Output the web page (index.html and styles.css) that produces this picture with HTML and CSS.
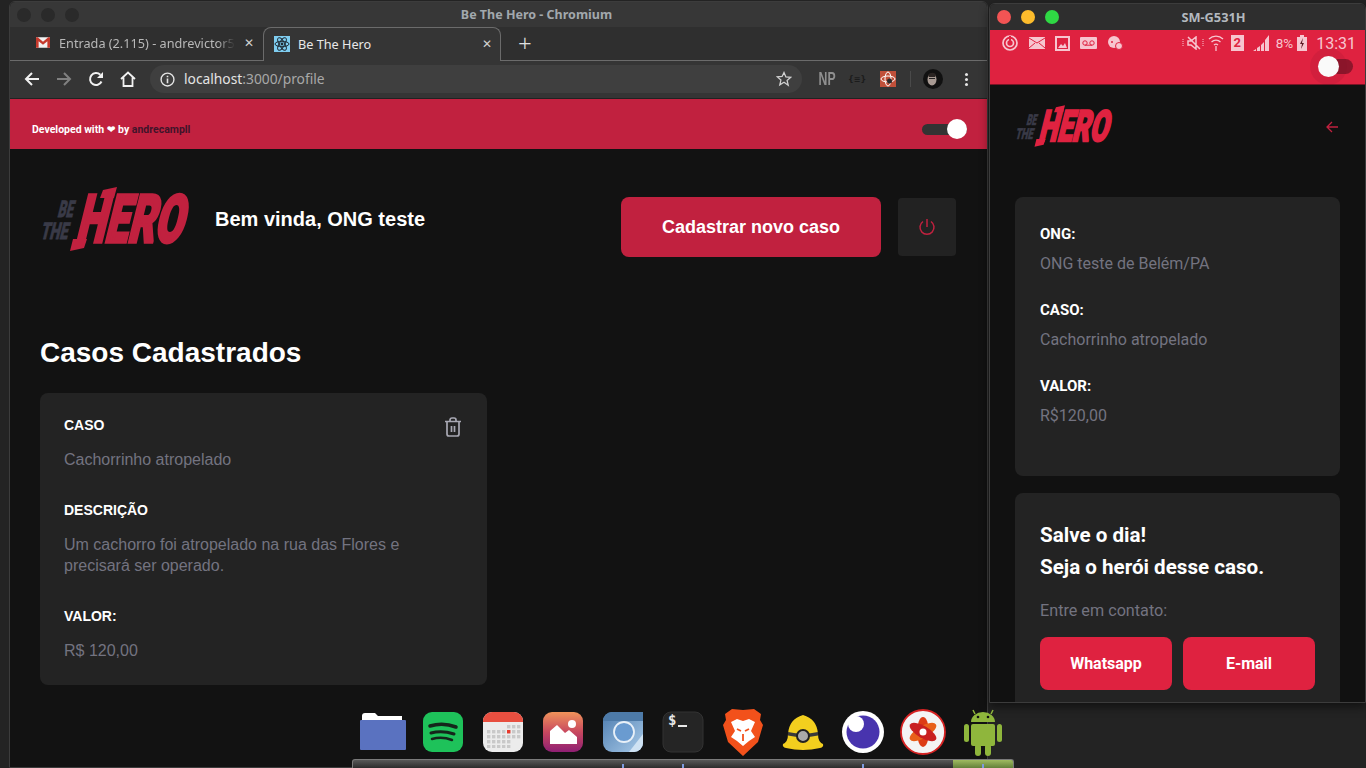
FILE: index.html
```html
<!DOCTYPE html>
<html lang="pt-br">
<head>
<meta charset="UTF-8">
<meta name="viewport" content="width=device-width, initial-scale=1.0">
<title>Be The Hero - Chromium</title>
<link rel="stylesheet" href="styles.css">
</head>
<body>
<svg class="defs" width="0" height="0">
  <!-- calendar grid -->
  <pattern id="cal" width="5" height="5" patternUnits="userSpaceOnUse" x="14" y="17"><rect width="3.400" height="3.400" fill="#c9c9c9"/></pattern>
</svg>

<!-- janela do chromium -->
<div class="browser">
  <div class="titlebar">
    <div class="lights"><span></span><span></span><span></span></div>
    <div class="win-title">Be The Hero - Chromium</div>
  </div>
  <div class="tabstrip">
    <div class="tab">
      <svg class="favicon" viewBox="0 0 16 12"><rect width="16" height="12" fill="#f2f2f2"/><path d="M0 0h2l6 5 6-5h2v12h-3V4.500L8 8.500 3 4.500V12H0z" fill="#c5392c"/></svg>
      <span class="tab-label tab-fade">Entrada (2.115) - andrevictor5</span>
      <span class="tab-x">✕</span>
    </div>
    <div class="tab tab-active">
      <svg class="favicon react" viewBox="0 0 16 16"><rect width="16" height="16" fill="#7fcdf0"/><g fill="none" stroke="#1f2a33" stroke-width="1"><ellipse cx="8" cy="8" rx="7" ry="2.700"/><ellipse cx="8" cy="8" rx="7" ry="2.700" transform="rotate(60 8 8)"/><ellipse cx="8" cy="8" rx="7" ry="2.700" transform="rotate(120 8 8)"/></g><circle cx="8" cy="8" r="1.400" fill="#1f2a33"/></svg>
      <span class="tab-label">Be The Hero</span>
      <span class="tab-x">✕</span>
    </div>
    <div class="tab-new">+</div>
  </div>
  <div class="toolbar">
    <svg class="tool" viewBox="0 0 16 16"><path d="M15 8H2M8 2L2 8l6 6" fill="none" stroke="#f1f1f1" stroke-width="2"/></svg>
    <svg class="tool" viewBox="0 0 16 16"><path d="M1 8h13M8 2l6 6-6 6" fill="none" stroke="#808080" stroke-width="2"/></svg>
    <svg class="tool" viewBox="0 0 16 16"><path d="M13.500 10.500A6 6 0 1 1 12.300 3.800" fill="none" stroke="#f1f1f1" stroke-width="2"/><path d="M15 1v6H9z" fill="#f1f1f1"/></svg>
    <svg class="tool" viewBox="0 0 16 16"><path d="M1 8l7-6.500L15 8M3.500 6.500V15h9V6.500" fill="none" stroke="#f1f1f1" stroke-width="1.800"/></svg>
    <div class="omnibox">
      <svg class="info" viewBox="0 0 14 14"><circle cx="7" cy="7" r="6" fill="none" stroke="#e4e4e4" stroke-width="1.300"/><path d="M7 6v4.500M7 3.500v1.500" stroke="#e4e4e4" stroke-width="1.500"/></svg>
      <span class="url">localhost<span class="url-dim">:3000/profile</span></span>
      <svg class="star" viewBox="0 0 16 16"><path d="M8 1.500l1.900 4.400 4.800.4-3.600 3.200 1.100 4.700L8 11.300l-4.200 2.500 1.100-4.700-3.600-3.200 4.800-.4z" fill="none" stroke="#cfcfcf" stroke-width="1.300"/></svg>
    </div>
    <div class="ext ext-np">NP</div>
    <div class="ext ext-json">{≡}</div>
    <svg class="ext-box" viewBox="0 0 16 16"><rect width="16" height="16" fill="#c0503a"/><g fill="none" stroke="#fff" stroke-width="1"><ellipse cx="8" cy="8" rx="7" ry="3"/><ellipse cx="8" cy="8" rx="3" ry="7"/></g><circle cx="9.500" cy="10" r="2.500" fill="#2b2b2b"/></svg>
    <div class="sep"></div>
    <svg class="avatar" viewBox="0 0 20 20"><circle cx="10" cy="10" r="10" fill="#111"/><ellipse cx="9" cy="10.500" rx="4.500" ry="6" fill="#a89a93"/><path d="M5 6c2-3 7-3 8 0l-1 2H6z" fill="#2a2422"/><path d="M6 9.500h6" stroke="#222" stroke-width="1.200"/></svg>
    <div class="kebab"><span></span><span></span><span></span></div>
  </div>

  <div class="page">
    <div class="banner">
      <div class="credit">Developed with <span class="heart">❤</span> by <span class="credit-link">andrecampll</span></div>
      <div class="switch"><span class="knob"></span></div>
    </div>
    <div class="profile">
      <div class="profile-head">
        <svg class="logo-main" viewBox="0 -8 160 80">
          <g class="logo-text">
            <text transform="translate(17,30) skewX(-14) scale(.55,1)" class="logo-small">BE</text>
            <text transform="translate(0,52) skewX(-14) scale(.62,1)" class="logo-small">THE</text>
            <text transform="translate(35,55) skewX(-14) scale(.62,1)" class="logo-big">HERO</text>
          </g>
          <polygon points="33,52 47,52 44,61 30,64" fill="currentColor"/>
          <polygon points="60,11 74,11 77,0 63,3" fill="currentColor"/>
        </svg>
        <div class="welcome">Bem vinda, ONG teste</div>
        <a class="new-case">Cadastrar novo caso</a>
        <div class="logout">
          <svg viewBox="0 0 18 18"><path d="M9 1v8M5 3.500a7 7 0 1 0 8 0" fill="none" stroke="#c1213f" stroke-width="1.500"/></svg>
        </div>
      </div>
      <h1 class="cases-title">Casos Cadastrados</h1>
      <div class="case-card">
        <svg class="trash" viewBox="0 0 18 20"><path d="M1 4.500h16M3 4.500V17a2 2 0 0 0 2 2h8a2 2 0 0 0 2-2V4.500M6 4.500V3a2 2 0 0 1 2-2h2a2 2 0 0 1 2 2v1.500M7.500 9v6M10.500 9v6" fill="none" stroke="#a8a8b3" stroke-width="1.700"/></svg>
        <div class="case-label">CASO</div>
        <p class="case-value">Cachorrinho atropelado</p>
        <div class="case-label">DESCRIÇÃO</div>
        <p class="case-value">Um cachorro foi atropelado na rua das Flores e precisará ser operado.</p>
        <div class="case-label">VALOR:</div>
        <p class="case-value">R$ 120,00</p>
      </div>
    </div>
  </div>
</div>

<!-- janela do celular -->
<div class="phone">
  <div class="phone-title">
    <div class="traffic"><span class="t-red"></span><span class="t-yellow"></span><span class="t-green"></span></div>
    <div class="phone-name">SM-G531H</div>
  </div>
  <div class="phone-top">
    <div class="status">
      <svg class="st" width="18" height="16" viewBox="0 0 18 16"><circle cx="9" cy="8" r="7" fill="none" stroke="#f7c5cf" stroke-width="1.700"/><circle cx="9" cy="8" r="3.500" fill="none" stroke="#f7c5cf" stroke-width="1.700"/><path d="M9 1v6" stroke="#df2240" stroke-width="2"/></svg>
      <svg class="st" width="16" height="12" viewBox="0 0 16 12"><rect width="16" height="12" fill="#f7c5cf"/><path d="M0 1l8 5 8-5M0 11l6-5M16 11l-6-5" stroke="#df2240" fill="none"/></svg>
      <svg class="st" width="15" height="15" viewBox="0 0 15 15"><rect width="15" height="15" fill="#f7c5cf"/><rect x="2" y="2" width="11" height="11" fill="#df2240"/><path d="M3 12l3-4 2 2 2-3 2 5z" fill="#f7c5cf"/></svg>
      <svg class="st" width="17" height="12" viewBox="0 0 17 12"><rect width="17" height="12" rx="1" fill="#f7c5cf"/><circle cx="5" cy="6" r="2.200" fill="none" stroke="#df2240"/><circle cx="12" cy="6" r="2.200" fill="none" stroke="#df2240"/><path d="M5 8.200h7" stroke="#df2240"/></svg>
      <svg class="st" width="16" height="14" viewBox="0 0 16 14"><circle cx="7" cy="6" r="6" fill="#f7c5cf"/><circle cx="5" cy="6" r="1" fill="#df2240"/><circle cx="12" cy="10" r="3.500" fill="#f7c5cf" stroke="#df2240"/></svg>
      <div class="status-right">
        <svg width="23" height="14" viewBox="0 0 23 14"><path d="M6 5h3l5-4v12L9 9H6zM6 1l12 12" fill="none" stroke="#f7c5cf" stroke-width="1.500"/><path d="M1 3v8M21 3v8" stroke="#f7c5cf" stroke-dasharray="1 1"/></svg>
        <svg class="st-wifi" width="16" height="18" viewBox="0 0 16 18"><path d="M1 5a10 10 0 0 1 14 0M3.500 8a6.500 6.500 0 0 1 9 0M6 11a3 3 0 0 1 4 0M8 12v5" fill="none" stroke="#f7c5cf" stroke-width="1.300"/></svg>
        <span class="sim">2</span>
        <svg class="st-signal" width="17" height="16" viewBox="0 0 17 16"><path d="M0 16h3v-2zM4 16h3v-5l-3 2zM8 16h3V7L8 10zM12 16h4V0l-4 5z" fill="#f7c5cf"/></svg>
        <span class="pct">8%</span>
        <svg class="st-batt" width="10" height="16" viewBox="0 0 10 16"><rect y="2" width="10" height="14" fill="#f7c5cf"/><rect x="3" width="4" height="2" fill="#f7c5cf"/><path d="M6 3L3 9h2l-1 5 3-6H5z" fill="#5c1722"/></svg>
        <span class="clock">13:31</span>
      </div>
    </div>
    <div class="phone-switch"><span class="phone-knob"></span></div>
  </div>
  <div class="phone-body">
    <div class="phone-head">
      <svg class="logo-phone" viewBox="0 -8 160 80">
        <g class="logo-text">
          <text transform="translate(17,30) skewX(-14) scale(.55,1)" class="logo-small">BE</text>
          <text transform="translate(0,52) skewX(-14) scale(.62,1)" class="logo-small">THE</text>
          <text transform="translate(35,55) skewX(-14) scale(.62,1)" class="logo-big">HERO</text>
        </g>
        <polygon points="33,52 47,52 44,61 30,64" fill="currentColor"/>
        <polygon points="60,11 74,11 77,0 63,3" fill="currentColor"/>
      </svg>
      <svg class="back" viewBox="0 0 14 14"><path d="M13 7H2M7 2L2 7l5 5" fill="none" stroke="#c1213f" stroke-width="1.300"/></svg>
    </div>
    <div class="incident">
      <div class="inc-label">ONG:</div>
      <div class="inc-value">ONG teste de Belém/PA</div>
      <div class="inc-label">CASO:</div>
      <div class="inc-value">Cachorrinho atropelado</div>
      <div class="inc-label">VALOR:</div>
      <div class="inc-value">R$120,00</div>
    </div>
    <div class="contact">
      <div class="contact-title">Salve o dia!<br>Seja o herói desse caso.</div>
      <div class="contact-sub">Entre em contato:</div>
      <div class="contact-btns">
        <a class="contact-btn">Whatsapp</a>
        <a class="contact-btn">E-mail</a>
      </div>
    </div>
  </div>
</div>

<!-- dock -->
<div class="dock">
  <svg class="dock-icon" viewBox="0 0 60 48"><path d="M9 8q0-3 3-3h10l3 3h24v6H9z" fill="#fff"/><rect x="7" y="12" width="46" height="30" rx="1" fill="#5a72c0"/></svg>
  <svg class="dock-icon" viewBox="0 0 60 48"><rect x="10" y="4" width="40" height="40" rx="9" fill="#1ec25a"/><g fill="none" stroke="#15261b" stroke-linecap="round"><path d="M17 18q13-4 26 1" stroke-width="3.500"/><path d="M18 25q11-3 23 1" stroke-width="3"/><path d="M19 31q10-3 20 1" stroke-width="2.500"/></g></svg>
  <svg class="dock-icon" viewBox="0 0 60 48"><rect x="10" y="4" width="40" height="40" rx="9" fill="#ececec"/><path d="M10 14v-1a9 9 0 0 1 9-9h22a9 9 0 0 1 9 9v1z" fill="#e84f40"/><rect x="34" y="17" width="15" height="5" fill="url(#cal)"/><rect x="14" y="22" width="35" height="10" fill="url(#cal)"/><rect x="14" y="32" width="25" height="8" fill="url(#cal)"/><rect x="34" y="22" width="3.400" height="3.400" fill="#e8382b"/></svg>
  <svg class="dock-icon" viewBox="0 0 60 48"><defs><linearGradient id="pic" x1="0" y1="0" x2="0" y2="1"><stop offset="0" stop-color="#f0935a"/><stop offset=".5" stop-color="#c8485f"/><stop offset="1" stop-color="#8f1f73"/></linearGradient></defs><rect x="10" y="4" width="40" height="40" rx="9" fill="url(#pic)"/><circle cx="39" cy="16" r="4" fill="#fff"/><path d="M17 36V23l7-6 8 8 4-3 8 7v7z" fill="#fff"/></svg>
  <svg class="dock-icon" viewBox="0 0 60 48"><defs><linearGradient id="chr" x1="0" y1="0" x2="1" y2="1"><stop offset="0" stop-color="#4f7eb0"/><stop offset="1" stop-color="#a7c9e8"/></linearGradient></defs><rect x="10" y="4" width="40" height="40" rx="9" fill="url(#chr)"/><path d="M10 13h40V4H19a9 9 0 0 0-9 9z" fill="#4d7aa8"/><path d="M36 44l14-18v9a9 9 0 0 1-9 9z" fill="#cfe2f3"/><circle cx="31" cy="24" r="10" fill="#6a9bd0" stroke="#e8f0f8" stroke-width="1.800"/></svg>
  <svg class="dock-icon" viewBox="0 0 60 48"><rect x="10" y="4" width="40" height="40" rx="8" fill="#252525" stroke="#333"/><text x="15" y="17" class="term-text">$</text><rect x="25" y="17" width="9" height="2" fill="#e8e8e8"/></svg>
  <svg class="dock-icon" viewBox="0 0 60 48"><path d="M12 6l7-5 11 1 11-1 7 5-1 6 3 5-5 17-15 14-15-14-5-17 3-5z" fill="#f2511b"/><path d="M18 14l6-3 6 2 6-2 6 3-4 9 4 6-6 4-6 5-6-5-6-4 4-6z" fill="#fff"/><path d="M24 21l4 2M36 21l-4 2M30 26v7" stroke="#f2511b" stroke-width="1.800"/></svg>
  <svg class="dock-icon" viewBox="0 0 60 48"><path d="M10 36q5-2 5-10 1-15 15-19 14 4 15 19 0 8 5 10 1 3-3 4-17 4-34 0-4-1-3-4z" fill="#f3cf1e"/><path d="M15 24q15 3 30 0v3.500q-15 3-30 0z" fill="#3a3a3a"/><circle cx="30" cy="28" r="6" fill="#aaa" stroke="#222" stroke-width="2"/></svg>
  <svg class="dock-icon" viewBox="0 0 60 48"><circle cx="30" cy="24" r="21" fill="#fff"/><circle cx="30" cy="24" r="16.500" fill="#4834ae"/><circle cx="23" cy="16" r="8" fill="#fff"/></svg>
  <svg class="dock-icon" viewBox="0 0 60 48"><circle cx="30" cy="24" r="22" fill="#f4f4f4" stroke="#d72323" stroke-width="1.800"/><g fill="#dd3c16"><ellipse cx="30" cy="24" rx="6" ry="15"/><ellipse cx="30" cy="24" rx="6" ry="15" transform="rotate(60 30 24)" fill="#e8601a"/><ellipse cx="30" cy="24" rx="6" ry="15" transform="rotate(120 30 24)" fill="#c92020"/></g><circle cx="30" cy="24" r="4.500" fill="#fff" stroke="#c92020" stroke-width="2"/></svg>
  <svg class="dock-icon" viewBox="0 0 60 48"><g fill="#8fb63c"><path d="M18 14a12 10 0 0 1 24 0z"/><rect x="18" y="16" width="24" height="22" rx="2"/><rect x="11" y="16" width="5" height="18" rx="2.500"/><rect x="44" y="16" width="5" height="18" rx="2.500"/><rect x="22" y="36" width="6" height="12" rx="3"/><rect x="32" y="36" width="6" height="12" rx="3"/><path d="M22 6l-2-4M38 6l2-4" stroke="#8fb63c" stroke-width="1.500"/></g><circle cx="25" cy="9" r="1.300" fill="#111"/><circle cx="35" cy="9" r="1.300" fill="#111"/></svg>
</div>
<div class="shelf">
  <span class="dot dot1"></span><span class="dot dot2"></span><span class="dot dot3"></span><span class="dot dot4"></span>
  <span class="shelf-green"></span>
</div>
</body>
</html>
```
FILE: styles.css
```css
/* desktop */
html, body {
  margin: 0;
  height: 100%;
}
body {
  position: relative;
  width: 1366px;
  height: 768px;
  overflow: hidden;
  background: #232323;
  font-family: "Liberation Sans", Arial, sans-serif;
}
.defs {
  position: absolute;
}
p {
  margin: 0;
}

/* chromium window */
.browser {
  position: absolute;
  left: 9px;
  top: 1px;
  width: 979px;
  height: 767px;
  box-sizing: border-box;
  border: 1px solid #3c3c3c;
  border-radius: 6px 6px 0 0;
  display: flex;
  flex-direction: column;
  overflow: hidden;
  background: #121212;
}
.titlebar {
  height: 25px;
  flex: none;
  display: flex;
  align-items: center;
  background: #373737;
  position: relative;
}
.lights {
  display: flex;
  gap: 10px;
  padding-left: 7px;
}
.lights span {
  width: 14px;
  height: 14px;
  border-radius: 50%;
  background: #2a2a2a;
}
.win-title {
  position: absolute;
  left: 76px;
  right: 0;
  text-align: center;
  font: 700 12.500px "Noto Sans", sans-serif;
  color: #a2a8ad;
}
.tabstrip {
  height: 33px;
  flex: none;
  display: flex;
  align-items: stretch;
  background: #2f2f2f;
  border-bottom: 1px solid #6b6b6b;
  font: 12.700px "Noto Sans", sans-serif;
}
.tab {
  width: 227px;
  margin-left: 26px;
  padding-bottom: 2px;
  box-sizing: border-box;
  display: flex;
  align-items: center;
  gap: 9px;
  color: #b8b8b8;
}
.tab-label {
  flex: 1;
  white-space: nowrap;
}
.tab-fade {
  -webkit-mask-image: linear-gradient(to right, #000 90%, transparent);
  mask-image: linear-gradient(to right, #000 90%, transparent);
}
.tab-x {
  font-size: 12px;
  color: #d0d0d0;
  padding-right: 11px;
}
.favicon {
  width: 14px;
  height: 11px;
  flex: none;
}
.favicon.react {
  width: 16px;
  height: 16px;
}
.tab-active {
  width: 238px;
  margin: 0 0 -1px 0;
  padding-left: 10px;
  gap: 8px;
  background: #353535;
  border: 1px solid #6b6b6b;
  border-bottom: none;
  border-radius: 8px 8px 0 0;
  color: #e8e8e8;
  z-index: 1;
}
.tab-active .tab-x {
  padding-right: 8px;
}
.tab-new {
  margin-left: 17px;
  align-self: center;
  padding-bottom: 2px;
  font-size: 24px;
  line-height: 24px;
  font-weight: 300;
  color: #e0e0e0;
}
.toolbar {
  height: 37px;
  flex: none;
  box-sizing: border-box;
  display: flex;
  align-items: center;
  background: #353535;
  padding: 0 0 1px 14px;
  gap: 16px;
}
.tool {
  width: 16px;
  height: 16px;
  flex: none;
}
.omnibox {
  width: 652px;
  height: 28px;
  margin-left: -2px;
  flex: none;
  box-sizing: border-box;
  padding: 0 10px;
  display: flex;
  align-items: center;
  gap: 9px;
  background: #3f3f3f;
  border-radius: 14px;
  font: 13.800px "Noto Sans", sans-serif;
  color: #e4e4e4;
}
.info {
  width: 15px;
  height: 15px;
  flex: none;
}
.url {
  flex: 1;
  padding-bottom: 2px;
}
.url-dim {
  color: #a8a8a8;
}
.star {
  width: 16px;
  height: 16px;
  flex: none;
}
.ext {
  width: 16px;
  flex: none;
  text-align: center;
}
.ext-np {
  font: 700 18px "Liberation Sans", sans-serif;
  color: #8f8f8f;
  margin-left: -2px;
  transform: scaleX(.68);
  white-space: nowrap;
}
.ext-json {
  font: 700 8px "DejaVu Sans", sans-serif;
  color: #1c1c1c;
  white-space: nowrap;
}
.ext-box {
  width: 16px;
  height: 16px;
  flex: none;
}
.sep {
  width: 1px;
  height: 16px;
  background: #4a4a4a;
  margin-left: -2px;
}
.avatar {
  width: 20px;
  height: 20px;
  flex: none;
  margin-left: -4px;
}
.kebab {
  display: flex;
  flex-direction: column;
  gap: 2px;
  margin-left: 6px;
}
.kebab span {
  width: 3px;
  height: 3px;
  border-radius: 50%;
  background: #e6e6e6;
}

/* be the hero page */
.page {
  flex: 1;
  background: #121212;
  border-top: 1px solid #222;
}
.banner {
  height: 50px;
  box-sizing: border-box;
  padding: 10px 20px 0 22px;
  display: flex;
  align-items: center;
  justify-content: space-between;
  background: #c1213f;
}
.credit {
  font: 700 10.500px Roboto, sans-serif;
  color: #fff;
}
.heart {
  font-family: "DejaVu Sans", sans-serif;
}
.credit-link {
  color: #41142a;
}
.switch {
  width: 45px;
  height: 11px;
  border-radius: 6px;
  background: #333;
  position: relative;
}
.knob {
  position: absolute;
  right: 0;
  top: -5px;
  width: 20px;
  height: 20px;
  border-radius: 50%;
  background: #fff;
}
.profile {
  padding: 38px 31px 0 30px;
}
.profile-head {
  display: flex;
  align-items: flex-start;
}
/* logo letters: real text, skewed and thickened with a stroke */
.logo-text {
  font-family: Roboto, "Liberation Sans", sans-serif;
  font-weight: 900;
}
.logo-small {
  font-size: 23px;
  fill: #393a47;
  stroke: #393a47;
  stroke-width: .8;
}
.logo-big {
  font-size: 66px;
  fill: currentColor;
  stroke: currentColor;
  stroke-width: 3.500;
}
.logo-main {
  width: 160px;
  height: 80px;
  margin: -8px 0 -8px;
  flex: none;
  color: #c1213f;
}
.welcome {
  margin: 21px 0 0 15px;
  flex: 1;
  font-size: 20px;
  line-height: 23px;
  font-weight: 700;
  color: #fff;
}
.new-case {
  width: 260px;
  height: 60px;
  margin-top: 10px;
  margin-right: 1px;
  display: flex;
  align-items: center;
  justify-content: center;
  border-radius: 8px;
  background: #c1213f;
  color: #fff;
  font-size: 18px;
  font-weight: 700;
}
.logout {
  width: 58px;
  height: 58px;
  margin: 11px 0 0 16px;
  display: flex;
  align-items: center;
  justify-content: center;
  border-radius: 4px;
  background: #222;
}
.logout svg {
  width: 18px;
  height: 18px;
}
.cases-title {
  margin: 80px 0 0;
  font-size: 28px;
  line-height: 32px;
  font-weight: 700;
  color: #fff;
}
.case-card {
  position: relative;
  width: 447px;
  height: 292px;
  margin-top: 24px;
  box-sizing: border-box;
  padding: 24px;
  border-radius: 8px;
  background: #232323;
}
.trash {
  position: absolute;
  top: 24px;
  right: 25px;
  width: 18px;
  height: 20px;
}
.case-label {
  font-size: 14px;
  line-height: 16px;
  font-weight: 700;
  color: #fff;
}
.case-value {
  margin: 16px 0 32px;
  font-size: 16px;
  line-height: 21px;
  color: #737380;
}

/* android mirror window */
.phone {
  position: absolute;
  left: 989px;
  top: 3px;
  width: 377px;
  height: 700px;
  box-sizing: border-box;
  border: 1px solid #3c3c3c;
  border-radius: 6px 6px 0 0;
  box-shadow: 0 4px 10px rgba(0, 0, 0, .5);
  display: flex;
  flex-direction: column;
  overflow: hidden;
  background: #111;
}
.phone-title {
  height: 26px;
  flex: none;
  position: relative;
  display: flex;
  align-items: center;
  background: #2e2e2e;
}
.traffic {
  display: flex;
  gap: 10px;
  padding-left: 7px;
}
.traffic span {
  width: 14px;
  height: 14px;
  border-radius: 50%;
}
.t-red {
  background: #f25454;
}
.t-yellow {
  background: #fdbc2c;
}
.t-green {
  background: #2fd844;
}
.phone-name {
  position: absolute;
  left: 72px;
  right: 0;
  text-align: center;
  font: 700 12.800px "Noto Sans", sans-serif;
  color: #b3b9bf;
}
.phone-top {
  height: 55px;
  flex: none;
  background: #df2240;
  border-bottom: 1px solid #7a1425;
  box-sizing: border-box;
}
.status {
  height: 26px;
  display: flex;
  align-items: center;
  gap: 10px;
  padding: 0 9px 0 11px;
}
.status-right {
  margin-left: auto;
  display: flex;
  align-items: center;
  gap: 4px;
  color: #f7c5cf;
  font-family: Roboto, sans-serif;
}
.st-wifi {
  margin-left: -1px;
}
.sim {
  width: 13px;
  height: 16px;
  margin-left: 3px;
  background: #f7c5cf;
  color: #df2240;
  font-size: 13px;
  line-height: 16px;
  font-weight: 700;
  text-align: center;
}
.st-signal {
  margin-left: 5px;
}
.pct {
  font-size: 13.500px;
  margin-left: 2px;
}
.clock {
  font-size: 16px;
  margin-left: 5px;
}
.phone-switch {
  position: relative;
  width: 25px;
  height: 15px;
  margin: 3px 0 0 338px;
  border-radius: 8px;
  background: #8e162b;
}
.phone-knob {
  position: absolute;
  left: -10px;
  top: -3px;
  width: 21px;
  height: 21px;
  border-radius: 50%;
  background: #fafafa;
  box-shadow: 0 0 0 8px rgba(120, 20, 40, .12);
}
.phone-body {
  flex: 1;
  padding: 0 25px;
  background: #111;
}
.phone-head {
  height: 112px;
  display: flex;
  align-items: flex-start;
  justify-content: space-between;
}
.logo-phone {
  width: 104px;
  height: 52px;
  margin-top: 15px;
  color: #df2240;
}
.back {
  width: 14px;
  height: 14px;
  margin: 35px 1px 0 0;
}
.incident {
  height: 279px;
  box-sizing: border-box;
  padding: 25px 25px 0;
  border-radius: 8px;
  background: #232323;
  font-family: Roboto, sans-serif;
}
.inc-label {
  font-size: 15px;
  line-height: 24px;
  font-weight: 700;
  color: #fff;
}
.inc-value {
  margin: 6px 0 22px;
  font-size: 16px;
  line-height: 24px;
  color: #737380;
}
.contact {
  margin-top: 17px;
  height: 240px;
  box-sizing: border-box;
  padding: 26px 25px 0;
  border-radius: 8px;
  background: #232323;
  font-family: Roboto, sans-serif;
}
.contact-title {
  font-size: 20.600px;
  line-height: 32px;
  font-weight: 700;
  color: #fff;
}
.contact-sub {
  margin-top: 18px;
  font-size: 16.200px;
  line-height: 20px;
  color: #737380;
}
.contact-btns {
  margin-top: 16px;
  display: flex;
  gap: 11px;
}
.contact-btn {
  flex: 1;
  height: 53px;
  display: flex;
  align-items: center;
  justify-content: center;
  border-radius: 8px;
  background: #df2240;
  color: #fff;
  font-size: 16px;
  font-weight: 700;
}

/* dock */
.dock {
  position: absolute;
  left: 353px;
  top: 708px;
  display: flex;
}
.dock-icon {
  width: 60px;
  height: 48px;
  display: block;
}
.term-text {
  font: 700 14px "DejaVu Sans Mono", monospace;
  fill: #e8e8e8;
}
.shelf {
  position: absolute;
  left: 352px;
  top: 759px;
  width: 662px;
  height: 9px;
  box-sizing: border-box;
  border: 1px solid #7a7a7a;
  border-bottom: none;
  border-radius: 3px 3px 0 0;
  background: linear-gradient(#585858, #2c2c2c);
  overflow: hidden;
}
.shelf-green {
  position: absolute;
  right: 0;
  top: 0;
  width: 60px;
  height: 100%;
  background: linear-gradient(#9fbb60, #63803a);
}
.dot {
  position: absolute;
  top: 4px;
  width: 2px;
  height: 5px;
  background: #7d9be0;
}
.dot1 {
  left: 269px;
}
.dot2 {
  left: 329px;
}
.dot3 {
  left: 509px;
}
.dot4 {
  left: 629px;
  z-index: 1;
}
```
